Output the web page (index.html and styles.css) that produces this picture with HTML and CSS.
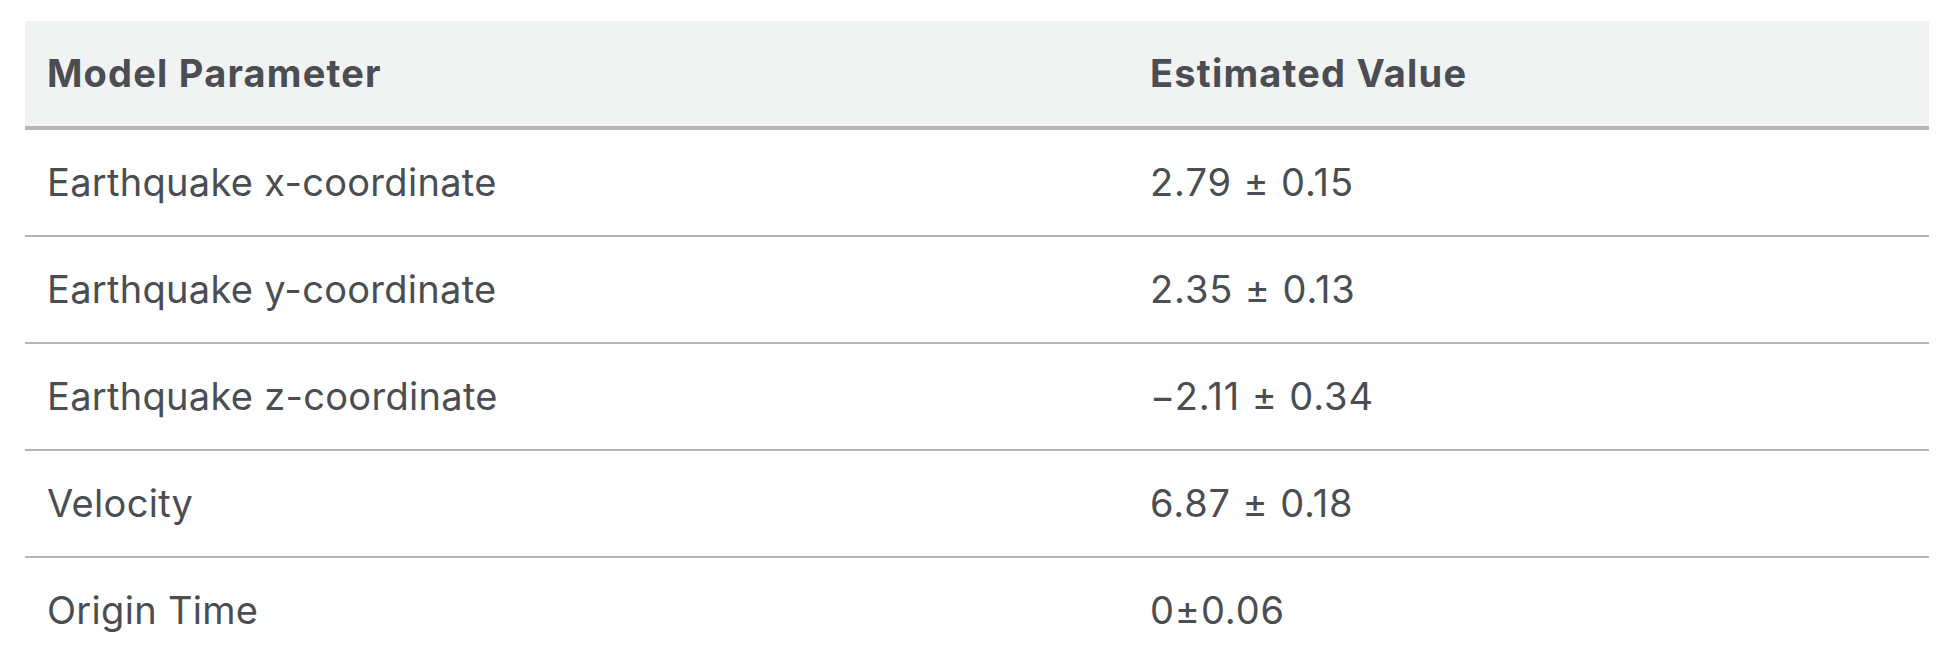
FILE: index.html
```html
<!DOCTYPE html>
<html>
<head>
<meta charset="utf-8">
<link rel="stylesheet" href="styles.css">
</head>
<body>
<div class="wrap">
<table class="params">
  <thead>
    <tr><th class="c1">Model Parameter</th><th>Estimated Value</th></tr>
  </thead>
  <tbody>
    <tr><td>Earthquake x-coordinate</td><td class="val">2.79 ± 0.15</td></tr>
    <tr><td>Earthquake y-coordinate</td><td class="val">2.35 ± 0.13</td></tr>
    <tr><td>Earthquake z-coordinate</td><td class="val">−2.11 ± 0.34</td></tr>
    <tr><td>Velocity</td><td class="val">6.87 ± 0.18</td></tr>
    <tr><td>Origin Time</td><td class="val">0±0.06</td></tr>
  </tbody>
</table>
</div>
</body>
</html>
```
FILE: styles.css
```css
html, body {
  margin: 0;
  padding: 0;
  background: #ffffff;
}
.wrap {
  padding: 21px 29px 0 25px;
}
.params {
  width: 100%;
  border-collapse: collapse;
  table-layout: fixed;
  font-family: Inter, "Noto Sans", sans-serif;
  font-size: 38px;
  color: #4a4d52;
}
.params th, .params td {
  text-align: left;
  padding: 0 22px;
  height: 105px;
  line-height: 105px;
  white-space: nowrap;
}
.params .c1 {
  width: 1059px;
}
.params thead th {
  background: #f1f2f2;
  font-weight: 700;
  letter-spacing: 1.2px;
  border-bottom: 4px solid #b5b5b5;
}
.params td {
  font-weight: 400;
  letter-spacing: 0.3px;
  border-bottom: 2px solid #b5b5b5;
}
.params td.val {
  letter-spacing: 0.9px;
}
```
